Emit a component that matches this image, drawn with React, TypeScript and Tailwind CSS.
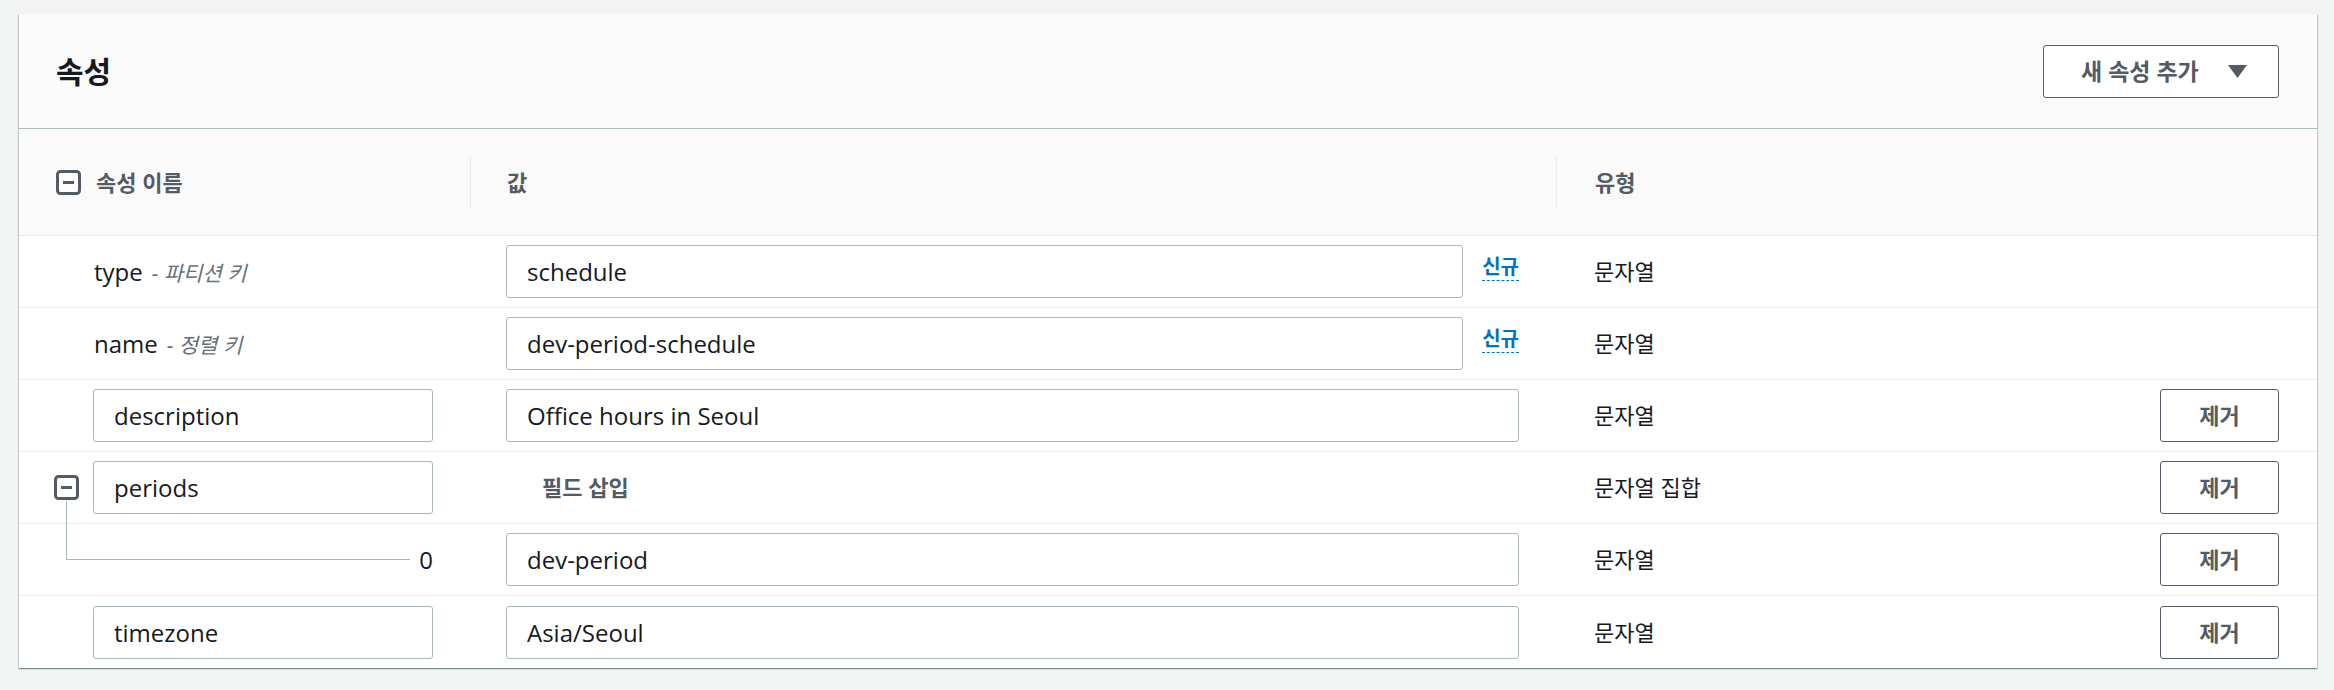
import React from 'react';

type Row = {
  key: string;
  keyNote?: string;
  keyEditable?: boolean;
  value?: string;
  isNew?: boolean;
  insertField?: boolean;
  type: string;
  removable?: boolean;
  collapsible?: boolean;
  child?: boolean;
};

const rows: Row[] = [
  { key: 'type', keyNote: '파티션 키', value: 'schedule', isNew: true, type: '문자열' },
  { key: 'name', keyNote: '정렬 키', value: 'dev-period-schedule', isNew: true, type: '문자열' },
  { key: 'description', keyEditable: true, value: 'Office hours in Seoul', type: '문자열', removable: true },
  { key: 'periods', keyEditable: true, insertField: true, type: '문자열 집합', removable: true, collapsible: true },
  { key: '0', child: true, value: 'dev-period', type: '문자열', removable: true },
  { key: 'timezone', keyEditable: true, value: 'Asia/Seoul', type: '문자열', removable: true },
];

function CollapseIcon() {
  return (
    <svg width="25" height="25" viewBox="0 0 25 25" className="shrink-0">
      <rect x="1.5" y="1.5" width="22" height="22" rx="3" fill="white" stroke="#545b64" strokeWidth="3" />
      <line x1="7" y1="12.5" x2="18" y2="12.5" stroke="#545b64" strokeWidth="3" />
    </svg>
  );
}

function TextInput({ value, className = '' }: { value: string; className?: string }) {
  return (
    <input
      readOnly
      value={value}
      className={`h-[53px] rounded-[3px] border border-[#aab7b8] bg-white px-[20px] text-[24px] text-[#16191f] outline-none ${className}`}
    />
  );
}

function RemoveButton() {
  return (
    <button className="h-[53px] w-[119px] rounded-[3px] border border-[#545b64] bg-white text-[22px] font-bold text-[#545b64]">
      제거
    </button>
  );
}

function AttributeRow({ row, last }: { row: Row; last: boolean }) {
  return (
    <div className={`grid h-[72px] grid-cols-[451px_1086px_1fr] ${last ? '' : 'border-b border-[#eaeded]'}`}>
      {row.child ? (
        <div className="relative flex items-center justify-end pr-[37px]">
          {/* tree connector from the parent's collapse icon */}
          <div className="absolute left-[47px] top-[-23px] h-[59px] w-[344px] border-b border-l border-[#aab7b8]" />
          <span className="text-[24px] text-[#16191f]">{row.key}</span>
        </div>
      ) : (
        <div className="flex items-center pl-[35px] pr-[37px]">
          <div className="w-[25px] shrink-0">{row.collapsible && <CollapseIcon />}</div>
          <div className="ml-[14px] flex items-center">
            {row.keyEditable ? (
              <TextInput value={row.key} className="w-[340px]" />
            ) : (
              <span className="ml-[1px] text-[24px] text-[#16191f]">
                {row.key}
                <span className="ml-[9px] text-[21px] italic text-[#687078]">- {row.keyNote}</span>
              </span>
            )}
          </div>
        </div>
      )}

      <div className="flex items-center gap-[19px] pl-[36px] pr-[37px]">
        {row.insertField ? (
          <span className="ml-[36px] text-[22px] font-bold text-[#545b64]">필드 삽입</span>
        ) : (
          <TextInput value={row.value ?? ''} className="min-w-0 flex-1" />
        )}
        {row.isNew && (
          <span className="mb-[6px] border-b border-dashed border-[#0073bb] pb-[3px] text-[20px] font-bold leading-none text-[#0073bb]">
            신규
          </span>
        )}
      </div>

      <div className="flex items-center justify-between pl-[38px] pr-[38px]">
        <span className="text-[22px] text-[#16191f]">{row.type}</span>
        {row.removable && <RemoveButton />}
      </div>
    </div>
  );
}

export default function App() {
  return (
    <div className="min-h-screen bg-[#f2f3f3] pl-[19px] pt-[14px] font-['Open_Sans','Noto_Sans_CJK_KR',sans-serif]">
      <div className="w-[2298px] bg-white shadow-[0_1px_1px_0_rgba(0,28,36,0.3),1px_1px_1px_0_rgba(0,28,36,0.15),-1px_1px_1px_0_rgba(0,28,36,0.15)]">
        <div className="flex h-[115px] items-center justify-between border-b border-[#aab7b8] bg-[#fafafa] pl-[37px] pr-[38px]">
          <h2 className="text-[30px] font-bold text-[#16191f]">속성</h2>
          <button className="flex h-[53px] w-[236px] items-center justify-between rounded-[3px] border border-[#545b64] bg-white pl-[37px] pr-[31px] text-[23px] font-bold text-[#545b64]">
            <span>새 속성 추가</span>
            <svg width="19" height="13" viewBox="0 0 19 13">
              <polygon points="0,0 19,0 9.5,13" fill="#545b64" />
            </svg>
          </button>
        </div>

        <div className="grid h-[107px] grid-cols-[451px_1086px_1fr] border-b border-[#eaeded] bg-[#fafafa] text-[22px] font-bold text-[#545b64]">
          <div className="flex items-center gap-[15px] pl-[37px]">
            <CollapseIcon />
            <span>속성 이름</span>
          </div>
          <div className="flex items-center">
            <div className="flex h-[51px] w-full items-center border-l border-[#eaeded] pl-[36px]">값</div>
          </div>
          <div className="flex items-center">
            <div className="flex h-[51px] w-full items-center border-l border-[#eaeded] pl-[38px]">유형</div>
          </div>
        </div>

        {rows.map((row, i) => (
          <AttributeRow key={row.key} row={row} last={i === rows.length - 1} />
        ))}
      </div>
    </div>
  );
}
